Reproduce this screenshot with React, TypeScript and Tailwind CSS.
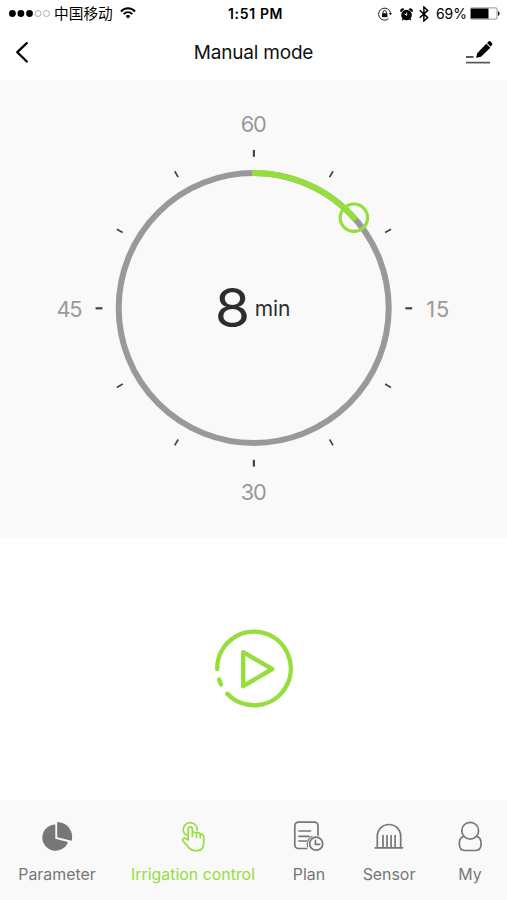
import type { ReactNode } from 'react';

const font = "font-['Inter','Noto_Sans_CJK_SC',sans-serif]";

function StatusBar() {
  return (
    <div className="relative flex h-[28px] items-center justify-between pl-[9px] pr-[7px] text-black">
      <div className="flex items-center">
        <svg width="42" height="12" viewBox="0 0 42 12">
          <circle cx="3.4" cy="5.5" r="3.4" />
          <circle cx="11.9" cy="5.5" r="3.4" />
          <circle cx="20.5" cy="5.5" r="3.4" />
          <circle cx="29" cy="5.5" r="3" fill="none" stroke="#999" strokeWidth="0.8" />
          <circle cx="37.4" cy="5.5" r="3" fill="none" stroke="#999" strokeWidth="0.8" />
        </svg>
        <span className="ml-[3px] text-[14.7px] leading-[20px]">中国移动</span>
        <svg className="ml-[7px] -mt-[2px]" width="16" height="12" viewBox="0 0 16 12" fill="none" stroke="#000" strokeWidth="1.9">
          <path d="M.9 4.5C5 .2 11 .2 15.100 4.500" />
          <path d="M3.600 7.100c2.500-2.600 6.300-2.600 8.800 0" />
          <path d="M8 11.500 5.600 9c1.300-1.300 3.500-1.300 4.800 0z" fill="#000" stroke="none" />
        </svg>
      </div>
      <span className="absolute left-[228px] top-[4px] w-[60px] whitespace-nowrap text-[14px] font-semibold leading-[20px] tracking-[0.65px]">1:51 PM</span>
      <div className="flex items-center">
        <svg width="14" height="14" viewBox="0 0 14 14" fill="none" stroke="#222">
          <path d="M12.500 6A6 6 0 1 0 10.500 11.700" strokeWidth="1" />
          <path d="M10.800 6h3.200l-1.600 2.300z" fill="#222" stroke="none" />
          <rect x="4" y="6.200" width="5.400" height="4" fill="#111" stroke="none" />
          <path d="M5 6.500V5.200a1.700 1.700 0 0 1 3.400 0v1.300" strokeWidth="1" />
        </svg>
        <svg className="ml-[8px]" width="13" height="13" viewBox="0 0 13 13">
          <circle cx="6.500" cy="7" r="5.300" />
          <path d="M.8 4.200A2.300 2.300 0 0 1 4.400 1.200zM12.200 4.200A2.300 2.300 0 0 0 8.600 1.200z" />
          <path d="m3.200 10.500-.8 1.700M9.800 10.500l.8 1.700" stroke="#000" strokeWidth="1.400" />
          <path d="M6.700 7.300V4.500M6.900 7.300 4.500 6" stroke="#fff" strokeWidth="1" />
        </svg>
        <svg className="ml-[6px] -mt-[1px]" width="10" height="16" viewBox="0 0 10 16" fill="none" stroke="#000" strokeWidth="1.500">
          <path d="m.7 4.300 8 7.300L4.900 15V1l3.800 3.400-8 7.300" />
        </svg>
        <span className="ml-[7px] w-[31px] whitespace-nowrap text-[14px] leading-[20px] tracking-[-0.1px]">69%</span>
        <svg className="ml-[3px] -mt-[1px]" width="30" height="13" viewBox="0 0 30 13">
          <rect x=".5" y=".9" width="26.500" height="11.200" rx="1" fill="#fff" stroke="#777" strokeWidth=".8" />
          <rect x="1" y="1.500" width="17.500" height="10" />
          <path d="M28 4.300c2 .3 2 4.200 0 4.500z" />
        </svg>
      </div>
    </div>
  );
}

function TitleBar() {
  return (
    <header className="flex h-[52px] items-center justify-between pl-[15px] pr-[13px]">
      <svg className="-mt-[4px]" width="28" height="24" viewBox="0 0 28 24" fill="none" stroke="#000" strokeWidth="2.300" strokeLinecap="round" strokeLinejoin="round">
        <path d="M11.800 3.200 2.300 12.200l9.500 9.300" />
      </svg>
      <h1 className="-mt-[3px] whitespace-nowrap text-[19px] leading-[26px] tracking-[-0.2px] text-[#111]">Manual mode</h1>
      <svg className="-mt-[5px]" width="30" height="24" viewBox="0 0 30 24">
        <path d="M2 17h7.500" stroke="#222" strokeWidth="1.500" />
        <path d="M2 22.600h24" stroke="#555" strokeWidth="1.700" />
        <path d="m12 17.800 1.400-4.900L22.300 3.800l4 3.900-9.300 9.100z" />
        <path d="m23 3.100 1.600-1.600c.7-.6 1.400-.5 2 .1l1.300 1.300c.6.600.6 1.300 0 1.900l-1.200 1.900z" />
      </svg>
    </header>
  );
}

const ticks = [0, 30, 60, 90, 120, 150, 180, 210, 240, 270, 300, 330];

function Dial() {
  return (
    <svg className="block h-[458px] w-[507px] bg-[#f9f9f9]" viewBox="0 0 507 458">
      {ticks.map((a) => (
        <path
          key={a}
          d="M253.900 70v6.800"
          transform={`rotate(${a} 253.900 228.300)`}
          stroke="#444"
          strokeWidth={a % 90 === 0 ? 2.2 : 1.7}
        />
      ))}
      <circle cx="253.700" cy="228" r="135" fill="none" stroke="#999" strokeWidth="6" />
      <path d="M252 93.100h1.700A135 135 0 0 1 355.700 139.600" fill="none" stroke="#96dd3e" strokeWidth="6" />
      <circle cx="353.900" cy="137.700" r="13.700" fill="none" stroke="#96dd3e" strokeWidth="3.200" />
      <g fill="#999" fontSize="21.800" textAnchor="middle">
        <text x="253.700" y="52.300" textLength="26">60</text>
        <text x="437.800" y="236.500" textLength="23">15</text>
        <text x="253.700" y="420.300" textLength="26">30</text>
        <text x="69.500" y="236.500" textLength="26">45</text>
      </g>
      <g fill="#2d2d2f">
        <text x="214.800" y="247" fontSize="53" textLength="35.500" lengthAdjust="spacingAndGlyphs">8</text>
        <text x="254.800" y="235.500" fontSize="21" textLength="35.500">min</text>
      </g>
    </svg>
  );
}

function PlayButton() {
  return (
    <button aria-label="Start">
      <svg width="80" height="80" viewBox="0 0 80 80" fill="none" stroke="#96dd3e" strokeWidth="4.400" strokeLinecap="round" strokeLinejoin="round">
        <path d="M3.200 40A36.800 36.800 0 1 1 13.300 64.800" />
        <path d="m5 50.500 2 4.900" />
        <path d="M29.200 23.200v34L58.200 40z" />
      </svg>
    </button>
  );
}

function Tab({ label, className, children }: { label: string; className: string; children: ReactNode }) {
  return (
    <div className={`flex shrink-0 flex-col items-center ${className}`}>
      <svg width="34" height="34" viewBox="0 0 34 34" fill="none" stroke="currentColor" strokeWidth="1.700" strokeLinecap="round" strokeLinejoin="round">
        {children}
      </svg>
      <span className="mt-[11px] whitespace-nowrap text-[15.900px] leading-[20px]">{label}</span>
    </div>
  );
}

function TabBar() {
  return (
    <nav className="flex h-[100px] bg-[#f9f9f9] pt-[20px] text-[#777]">
      <Tab label="Parameter" className="ml-[7px] w-[100px]">
        <g fill="currentColor" stroke="none">
          <path d="M15.300 4.400V18.800L28 21.900A13.200 13.200 0 1 1 15.300 4.400z" />
          <path d="M17.200 1.900A15.200 15.200 0 0 1 31.700 20.800L17.200 17.300z" />
        </g>
      </Tab>
      <Tab label="Irrigation control" className="ml-[16px] w-[140px] text-[#96dd3e]">
        <g transform="translate(1 0)">
          <path d="M9.400 15.300A6.900 6.900 0 1 1 20.100 10.500" />
          <path d="M11.200 19.500V9.200c0-3.100 4.200-3.100 4.200 0V16.500M15.400 12.600c2.800-1 4.100.2 4.100 2.100V17.500M19.500 12.800c2.500-.7 3.800.5 3.800 2.300V17.500M23.300 14.200c2.200-.4 3.400.6 3.400 2.500v6c0 5-2.200 7.900-6.400 7.900h-2.900c-2.600 0-4-1.200-5.600-3L6.100 21c-1.300-2 .6-3.500 2.700-2.500l2.400 1.500" />
        </g>
      </Tab>
      <Tab label="Plan" className="ml-[10px] w-[72px]">
        <path d="M14.600 28.500H6.400a3.600 3.600 0 0 1-3.600-3.600V5.700A3.600 3.600 0 0 1 6.400 2.100h16a3.600 3.600 0 0 1 3.600 3.600v9.400M7 11h11.500M7 16.300h10M7 21h7.500" />
        <circle cx="24.200" cy="23.700" r="6.500" />
        <path d="M15.700 27A9 9 0 0 1 20 16.300" strokeWidth="1.200" />
        <path d="M23.400 20.400v3.900h4.200" />
      </Tab>
      <Tab label="Sensor" className="ml-[4px] w-[80px]">
        <path d="M3.300 27.800H30.500M5.300 27.500V16.200a11.700 11.700 0 0 1 23.400 0v11.300M11 15.500v12M15 15.500v12M19.100 15.500v12M23.100 15.500v12" />
      </Tab>
      <Tab label="My" className="ml-[10px] w-[62px]">
        <circle cx="17.200" cy="10.700" r="8.400" />
        <path d="M10.200 16.500c-5.400 2-5.400 14 1.400 14h11.200c6.800 0 6.800-12 1.400-14" />
      </Tab>
    </nav>
  );
}

export default function App() {
  return (
    <div className={`flex h-[900px] w-[507px] flex-col overflow-hidden bg-white ${font}`}>
      <StatusBar />
      <TitleBar />
      <Dial />
      <main className="flex h-[262px] items-center justify-center">
        <PlayButton />
      </main>
      <TabBar />
    </div>
  );
}
